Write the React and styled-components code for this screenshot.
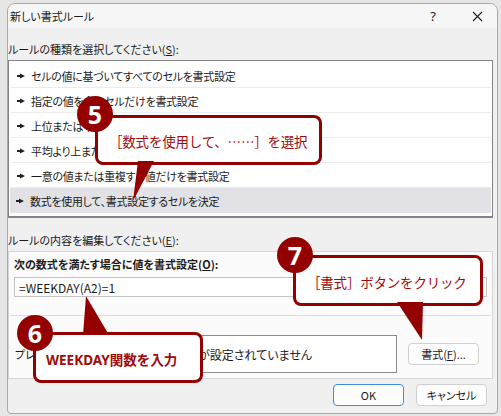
import React from 'react';
import styled, { createGlobalStyle } from 'styled-components';

const GlobalStyle = createGlobalStyle`
    html, body {
        margin: 0;
        padding: 0;
        background: #e6e6e6;
    }
    body {
        font-family: "Noto Sans CJK JP", "Noto Sans", sans-serif;
        font-feature-settings: "palt";
        color: #1b1b1b;
    }
`;

const rules = [
    'セルの値に基づいてすべてのセルを書式設定',
    '指定の値を含むセルだけを書式設定',
    '上位または下位に入る値だけを書式設定',
    '平均より上または下の値だけを書式設定',
    '一意の値または重複する値だけを書式設定',
    '数式を使用して、書式設定するセルを決定',
];

const callouts = [
    {
        n: 5,
        text: '［数式を使用して、……］を選択',
        box: { x: 95, y: 115, w: 227, h: 50 },
        badge: { x: 95, y: 114 },
        tail: [[138, 161], [154, 161], [133, 201]],
    },
    {
        n: 7,
        text: '［書式］ボタンをクリック',
        box: { x: 293, y: 255, w: 190, h: 51 },
        badge: { x: 295, y: 255 },
        tail: [[397, 302], [423, 302], [422, 340]],
    },
    {
        n: 6,
        text: 'WEEKDAY関数を入力',
        bold: true,
        box: { x: 33, y: 332, w: 170, h: 51 },
        badge: { x: 35, y: 333 },
        tail: [[83, 335], [109, 335], [86, 296]],
    },
];

function Pointer() {
    return (
        <svg width="8" height="6" viewBox="0 0 8 6">
            <polygon points="0,2 3,2 3,0.5 8,3 3,5.5 3,4 0,4" fill="#222" />
        </svg>
    );
}

function Tail({ points }) {
    const xs = points.map((p) => p[0]);
    const ys = points.map((p) => p[1]);
    const left = Math.min(...xs);
    const top = Math.min(...ys);
    const w = Math.max(...xs) - left;
    const h = Math.max(...ys) - top;
    return (
        <TailSvg
            width={w}
            height={h}
            viewBox={`0 0 ${w} ${h}`}
            style={{ left, top }}
        >
            <polygon
                points={points.map(([x, y]) => `${x - left},${y - top}`).join(' ')}
                fill="#940000"
            />
        </TailSvg>
    );
}

function Callout({ c }) {
    return (
        <>
            <Bubble $x={c.box.x} $y={c.box.y} $w={c.box.w} $h={c.box.h} $bold={c.bold}>
                {c.text}
            </Bubble>
            <Tail points={c.tail} />
            <Badge $x={c.badge.x} $y={c.badge.y}>{c.n}</Badge>
        </>
    );
}

export default function App() {
    return (
        <Page>
            <GlobalStyle />
            <Window>
                <TitleBar>
                    <span>新しい書式ルール</span>
                    <TitleTools>
                        <span>?</span>
                        <svg width="11" height="11" viewBox="0 0 11 11">
                            <path d="M1 1 L10 10 M10 1 L1 10" stroke="#222" strokeWidth="1.1" />
                        </svg>
                    </TitleTools>
                </TitleBar>
                <Body>
                    <Label>ルールの種類を選択してください(<u>S</u>):</Label>
                    <RuleList>
                        {rules.map((r, i) => (
                            <RuleRow key={r} $selected={i === rules.length - 1}>
                                <Pointer />
                                <span>{r}</span>
                            </RuleRow>
                        ))}
                    </RuleList>
                    <Label $gap={15}>ルールの内容を編集してください(<u>E</u>):</Label>
                    <Panel>
                        <BoldLabel>次の数式を満たす場合に値を書式設定(<u>O</u>):</BoldLabel>
                        <FormulaInput>=WEEKDAY(A2)=1</FormulaInput>
                        <Divider />
                        <PreviewRow>
                            <span>プレビュー:</span>
                            <PreviewBox>書式が設定されていません</PreviewBox>
                            <Button $w={71}>書式(<u>F</u>)...</Button>
                        </PreviewRow>
                    </Panel>
                    <ButtonRow>
                        <Button $w={71} $primary>OK</Button>
                        <Button $w={71}>キャンセル</Button>
                    </ButtonRow>
                </Body>
            </Window>
            {callouts.map((c) => (
                <Callout key={c.n} c={c} />
            ))}
        </Page>
    );
}

const Page = styled.div`
    position: relative;
    width: 501px;
    height: 416px;
    overflow: hidden;
    padding-top: 3px;
    box-sizing: border-box;
`;

const Window = styled.div`
    margin-left: 7px;
    width: 491px;
    height: 411px;
    box-sizing: border-box;
    border: 1px solid #a8a8a8;
    border-radius: 8px 8px 4px 4px;
    background: #f0f0f0;
    display: flex;
    flex-direction: column;
    overflow: hidden;
    font-size: 11px;
`;

const TitleBar = styled.div`
    height: 24px;
    background: #f6f6f6;
    display: flex;
    align-items: center;
    justify-content: space-between;
    padding: 0 14px 0 2px;
    font-size: 11px;
`;

const TitleTools = styled.div`
    display: flex;
    align-items: center;
    gap: 36px;
    font-size: 13px;
    font-family: "Noto Sans", sans-serif;
`;

const Body = styled.div`
    flex: 1;
    display: flex;
    flex-direction: column;
    padding-right: 4px;
`;

const Label = styled.div`
    margin-top: ${(p) => p.$gap || 14}px;
    margin-bottom: 4px;
    line-height: 14px;
    height: 14px;
`;

const RuleList = styled.div`
    background: #fff;
    border: 1px solid #858585;
    border-bottom-width: 2px;
    padding: 2px 1px 3px;
    display: flex;
    flex-direction: column;
`;

const RuleRow = styled.div`
    height: 25px;
    box-sizing: border-box;
    display: flex;
    align-items: center;
    gap: 6px;
    padding: 2px 0 0 6px;
    letter-spacing: -0.3px;
    border-bottom: 1px solid ${(p) => (p.$selected ? 'transparent' : '#ececec')};
    background: ${(p) => (p.$selected ? '#e1e1e6' : 'transparent')};
    margin-left: ${(p) => (p.$selected ? 0 : 1)}px;
`;

const Panel = styled.div`
    background: #fbfbfb;
    border: 1px solid #d6d6d6;
    padding: 5px 5px 5px;
    display: flex;
    flex-direction: column;
`;

const BoldLabel = styled.div`
    font-weight: bold;
    line-height: 14px;
    margin-bottom: 6px;
`;

const FormulaInput = styled.div`
    height: 20px;
    box-sizing: border-box;
    background: #fff;
    border: 1px solid #c4c4c4;
    padding: 0 4px;
    display: flex;
    align-items: center;
    font-size: 12px;
    font-feature-settings: normal;
`;

const Divider = styled.div`
    height: 1px;
    background: #dcdcdc;
    margin: 18px -4px 0;
`;

const PreviewRow = styled.div`
    margin-top: 19px;
    height: 38px;
    display: flex;
    align-items: center;
    gap: 11px;
    padding-left: 1px;

    & > span {
        width: 63px;
    }
`;

const PreviewBox = styled.div`
    width: 308px;
    height: 38px;
    box-sizing: border-box;
    background: #fff;
    border: 1px solid #8c8c8c;
    display: flex;
    align-items: center;
    justify-content: center;
    font-size: 12px;
`;

const Button = styled.div`
    width: ${(p) => p.$w}px;
    height: 22px;
    box-sizing: border-box;
    background: #fdfdfd;
    border: 1px solid ${(p) => (p.$primary ? '#3f8ed8' : '#d0d0d0')};
    border-radius: 4px;
    display: flex;
    align-items: center;
    justify-content: center;
    font-size: 11px;
    font-family: "Noto Sans CJK JP", "Noto Sans", sans-serif;
`;

const ButtonRow = styled.div`
    margin-top: 5px;
    display: flex;
    justify-content: flex-end;
    gap: 12px;
    padding-right: 6px;
`;

const Bubble = styled.div`
    position: absolute;
    left: ${(p) => p.$x}px;
    top: ${(p) => p.$y}px;
    width: ${(p) => p.$w}px;
    height: ${(p) => p.$h}px;
    box-sizing: border-box;
    background: #fff;
    border: 3px solid #940000;
    border-radius: 8px;
    display: flex;
    align-items: center;
    padding: 2px 0 0 ${(p) => (p.$bold ? 10 : 11)}px;
    color: #a00a0a;
    font-family: ${(p) => (p.$bold ? '"Noto Sans", "Noto Sans CJK JP", sans-serif' : 'inherit')};
    font-size: 13.5px;
    letter-spacing: ${(p) => (p.$bold ? 0 : -0.2)}px;
    font-weight: ${(p) => (p.$bold ? 'bold' : 'normal')};
    font-feature-settings: normal;
    white-space: nowrap;
`;

const TailSvg = styled.svg`
    position: absolute;
    display: block;
`;

const Badge = styled.div`
    position: absolute;
    left: ${(p) => p.$x - 18}px;
    top: ${(p) => p.$y - 18}px;
    width: 36px;
    height: 36px;
    border-radius: 50%;
    background: #940000;
    color: #fff;
    font-family: "Noto Sans", "DejaVu Sans", sans-serif;
    font-weight: bold;
    font-size: 25px;
    display: flex;
    align-items: center;
    justify-content: center;
    line-height: 1;
`;
